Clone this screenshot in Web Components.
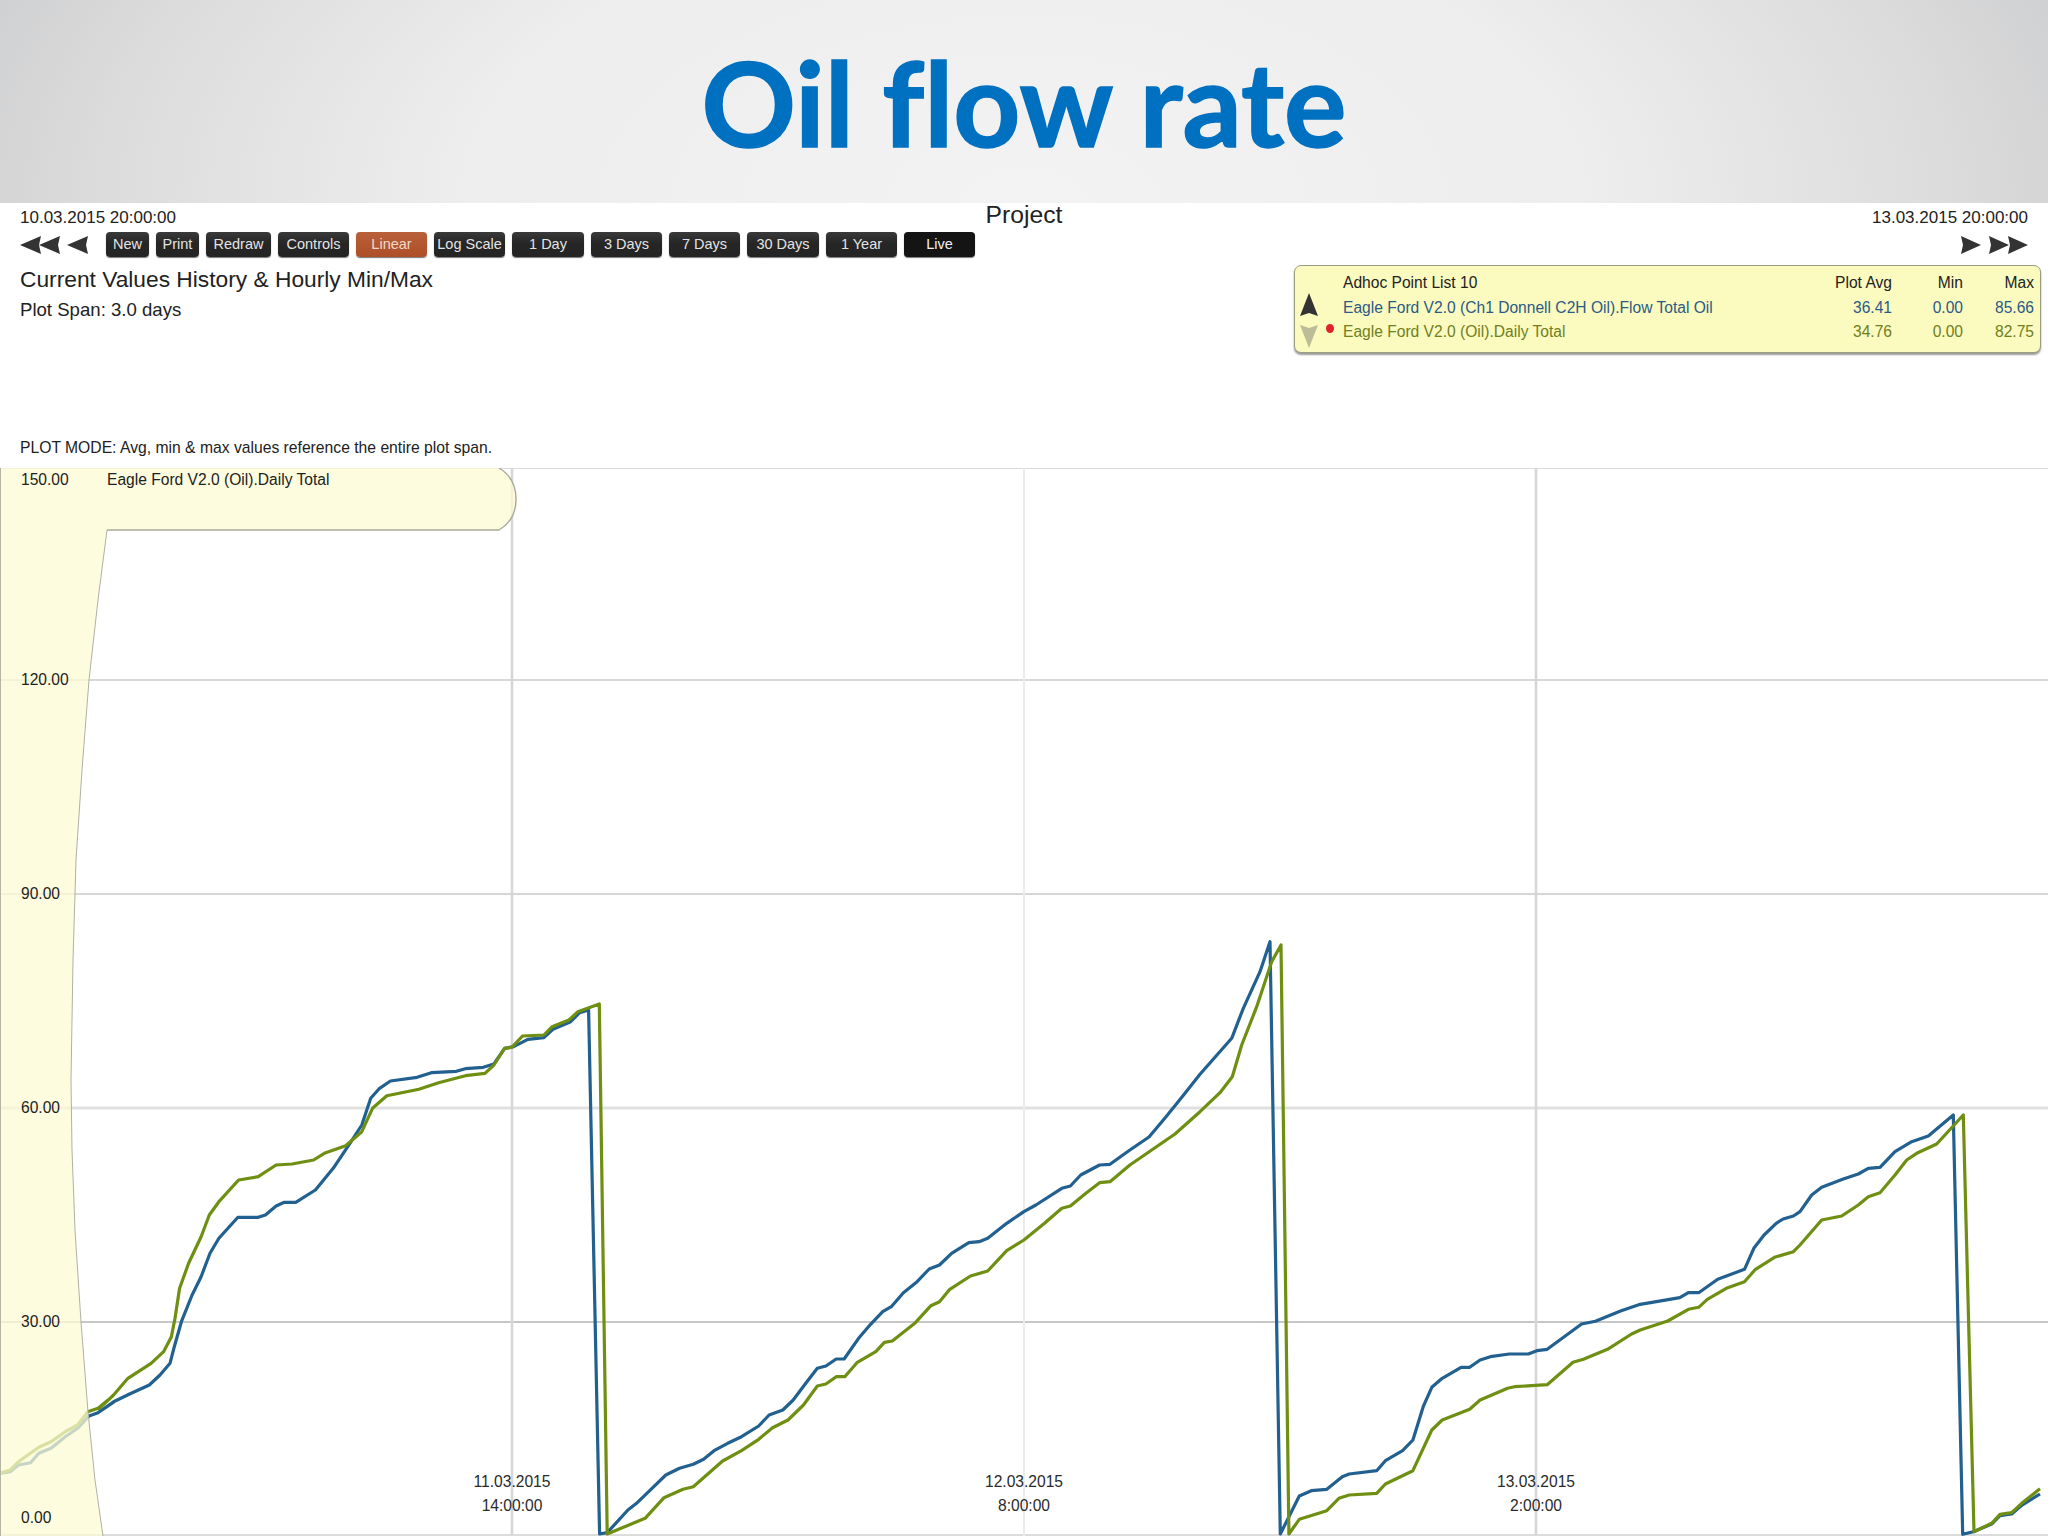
<!DOCTYPE html>
<html lang="en">
<head>
<meta charset="utf-8">
<title>Oil flow rate</title>
<style>
html,body{margin:0;padding:0;background:#fff;width:2048px;height:1536px;overflow:hidden;font-family:"Liberation Sans",Arial,sans-serif;color:#222}
oil-slide{display:block}
</style>
</head>
<body>
<oil-slide>
  <slide-title>Oil flow rate</slide-title>
  <plot-controls>
    <span slot="start">10.03.2015 20:00:00</span>
    <span slot="project">Project</span>
    <span slot="end">13.03.2015 20:00:00</span>
    <tool-button slot="tools" style="--w:43px">New</tool-button>
    <tool-button slot="tools" style="--w:43px">Print</tool-button>
    <tool-button slot="tools" style="--w:65px">Redraw</tool-button>
    <tool-button slot="tools" style="--w:71px">Controls</tool-button>
    <tool-button slot="tools" style="--w:71px" kind="active">Linear</tool-button>
    <tool-button slot="tools" style="--w:71px">Log Scale</tool-button>
    <tool-button slot="tools" style="--w:72px">1 Day</tool-button>
    <tool-button slot="tools" style="--w:71px">3 Days</tool-button>
    <tool-button slot="tools" style="--w:71px">7 Days</tool-button>
    <tool-button slot="tools" style="--w:72px">30 Days</tool-button>
    <tool-button slot="tools" style="--w:71px">1 Year</tool-button>
    <tool-button slot="tools" style="--w:71px" kind="live">Live</tool-button>
    <legend-box slot="legend">
      <legend-row kind="head" name="Adhoc Point List 10" avg="Plot Avg" min="Min" max="Max"></legend-row>
      <legend-row kind="blue" name="Eagle Ford V2.0 (Ch1 Donnell C2H Oil).Flow Total Oil" avg="36.41" min="0.00" max="85.66"></legend-row>
      <legend-row kind="green" name="Eagle Ford V2.0 (Oil).Daily Total" avg="34.76" min="0.00" max="82.75"></legend-row>
    </legend-box>
  </plot-controls>
  <oil-chart></oil-chart>
</oil-slide>
<script>
function shell(el,html){el.attachShadow({mode:'open'}).innerHTML=html;}

customElements.define('oil-slide',class extends HTMLElement{
  constructor(){super();shell(this,`<style>:host{display:flex;flex-direction:column;width:2048px;height:1536px;background:#fff}</style><slot></slot>`);}
});

customElements.define('slide-title',class extends HTMLElement{
  constructor(){super();shell(this,`<style>
  :host{display:flex;align-items:center;justify-content:center;height:203px;box-sizing:border-box;padding-top:2px;
    background:radial-gradient(ellipse 56% 300% at 50% 100%,#f3f3f4 0%,#ededee 50%,#dcdcdd 80%,#c9cacb 104%);
    font:700 117px/1 Lato,"Open Sans",sans-serif;font-variant-ligatures:none;-webkit-text-stroke:1.5px #0070c0;color:#0070c0}
  </style><slot></slot>`);}
});

customElements.define('tool-button',class extends HTMLElement{
  constructor(){super();shell(this,`<style>
  :host{display:flex;align-items:center;justify-content:center;box-sizing:border-box;width:var(--w);height:25px;border-radius:4px;
    background:linear-gradient(#3a3a3a,#262626 45%,#242424);color:#e4e4e4;font:14.5px/1 "Liberation Sans",Arial,sans-serif;white-space:nowrap;
    box-shadow:0 1px 1px #777}
  :host([kind=active]){background:linear-gradient(#b9603a,#ad4f27);color:#f0d8cc}
  :host([kind=live]){background:#141414;color:#f0f0f0}
  </style><slot></slot>`);}
});

customElements.define('nav-arrows',class extends HTMLElement{
  constructor(){super();
    const dir=this.getAttribute('dir-to');
    const left=`<svg width="68" height="18" viewBox="0 0 68 18" aria-hidden="true"><path fill="#333" d="M0 9 21 0 19 9 21 18ZM19 9 40 0 38 9 40 18ZM47 9 68 0 66 9 68 18Z"/></svg>`;
    const right=`<svg width="67" height="18" viewBox="0 0 67 18" aria-hidden="true"><path fill="#333" d="M0 0 20 9 0 18 2 9ZM28 0 48 9 28 18 30 9ZM47 0 67 9 47 18 49 9Z"/></svg>`;
    shell(this,`<style>:host{display:flex;height:18px}svg{display:block}</style>${dir==='right'?right:left}`);
  }
});

customElements.define('plot-controls',class extends HTMLElement{
  constructor(){super();shell(this,`<style>
  :host{display:flex;flex-direction:column;height:265px;box-sizing:border-box;font-family:"Liberation Sans",Arial,sans-serif;color:#222}
  .top{display:grid;grid-template-columns:1fr auto 1fr;padding:0 20px;column-gap:0}
  .date{font-size:17px;line-height:20px;padding-top:5px;height:24px;box-sizing:border-box;white-space:nowrap;letter-spacing:0}
  .left{display:flex;flex-direction:column}
  .right{display:flex;flex-direction:column;align-items:flex-end;padding-right:0}
  .project{font-size:24.7px;line-height:24px;text-align:center}
  .bar{display:flex;align-items:center;margin-top:5px;height:25px}
  .tools{display:flex;gap:7px;margin-left:18px}
  .mid{display:flex;justify-content:space-between;align-items:flex-start;padding:8px 7px 0 20px}
  .h1{font-size:22.75px;line-height:30px;white-space:nowrap;margin-top:-1px}
  .h2{font-size:18.6px;line-height:24px;margin-top:4px;white-space:nowrap}
  .mode{margin-top:auto;padding:0 20px 10px;font-size:15.7px;line-height:20px;white-space:nowrap}
  </style>
  <div class="top">
    <div class="left"><div class="date"><slot name="start"></slot></div>
      <div class="bar"><nav-arrows dir-to="left"></nav-arrows><div class="tools"><slot name="tools"></slot></div></div></div>
    <div class="project"><slot name="project"></slot></div>
    <div class="right"><div class="date"><slot name="end"></slot></div>
      <div class="bar"><nav-arrows dir-to="right"></nav-arrows></div></div>
  </div>
  <div class="mid">
    <div><div class="h1">Current Values History &amp; Hourly Min/Max</div><div class="h2">Plot Span: 3.0 days</div></div>
    <slot name="legend"></slot>
  </div>
  <div class="mode">PLOT MODE: Avg, min &amp; max values reference the entire plot span.</div>`);}
});

customElements.define('legend-box',class extends HTMLElement{
  constructor(){super();shell(this,`<style>
  :host{display:block;box-sizing:border-box;width:747px;height:88px;background:#fbfabf;border:1.5px solid #9c9c80;border-radius:7px;
    box-shadow:0 2px 2px #9a9a9a;padding:5px 6px 0 48px;position:relative}
  svg{position:absolute;left:4px;top:27px}
  i{position:absolute;left:31px;top:58px;width:8px;height:9px;border-radius:50%;background:#e2202c}
  </style>
  <svg width="20" height="55" viewBox="0 0 20 55" aria-hidden="true"><path fill="#333" d="M10 0 19 23 10 20 1 23Z"/><path fill="#bdbc98" d="M1 32 10 35 19 32 10 55Z"/></svg><i></i><slot></slot>`);}
});

customElements.define('legend-row',class extends HTMLElement{
  constructor(){super();
    const a=n=>this.getAttribute(n);
    shell(this,`<style>
    :host{display:grid;grid-template-columns:1fr 70px 71px 71px;height:24.6px;font:15.6px/24.6px "Liberation Sans",Arial,sans-serif;color:#222;white-space:nowrap}
    :host([kind=blue]){color:#2c5a86}
    :host([kind=green]){color:#6f8022}
    span+span{text-align:right}
    </style><span>${a('name')}</span><span>${a('avg')}</span><span>${a('min')}</span><span>${a('max')}</span>`);
  }
});

customElements.define('oil-chart',class extends HTMLElement{
  constructor(){super();
    const z7=p=>[60+p[0]/2.8,990+p[1]/3], z8=p=>[590+p[0]/2.904,1130+p[1]/3], z9=p=>[1270+p[0]/2.904,1180+p[1]/3],
          z5=p=>[1200+p[0]/3,920+p[1]/3], z6=p=>[1800+p[0]/3,1100+p[1]/3], z4=p=>[p[0]/2.45,1300+p[1]/3];
    const blue=[
      ...[[0,520],[25,515],[45,495],[75,488],[95,460],[125,445],[160,410],[190,385],[218,348],[240,338],[280,305]].map(z4),
      ...[[120,1258],[150,1235],[195,1212],[250,1185],[280,1155],[308,1120],[320,1070],[340,995],[370,915],[395,860],[420,790],[445,745],[498,682],[555,682],[575,675],[605,648],[628,637],[660,637],[715,600],[765,535],[815,455],[845,405],[870,325],[895,295],[925,273],[1000,262],[1040,248],[1110,244],[1135,236],[1185,232],[1215,222],[1245,175],[1270,170],[1310,148],[1355,143],[1380,118],[1430,95],[1455,68],[1480,60]].map(z7),
      ...[[28,1212],[50,1208],[110,1140],[135,1120],[180,1075],[220,1035],[260,1015],[300,1003],[330,988],[360,962],[400,940],[440,920],[490,888],[520,855],[560,840],[590,810],[625,762],[660,715],[685,708],[715,687],[738,687],[780,625],[815,583],[850,545],[875,530],[910,488],[950,455],[985,417],[1015,405],[1050,370],[1100,338],[1130,335],[1155,325],[1210,280],[1260,245],[1295,225],[1370,175],[1395,168],[1425,135],[1480,105],[1510,103],[1568,60]].map(z8),
      [1149,1137],[1165,1118],[1182,1097],
      ...[[0,463],[95,355],[130,265],[180,155],[210,65]].map(z5),
      ...[[30,1062],[85,948],[120,932],[165,928],[210,890],[230,882],[310,872],[335,842],[385,812],[415,780],[445,680],[470,622],[500,595],[555,562],[580,562],[610,540],[640,530],[695,522],[750,522],[775,512],[805,508],[905,432],[945,424],[1020,392],[1075,373],[1190,353],[1215,338],[1245,338],[1300,298],[1378,268],[1405,205],[1435,165],[1470,130],[1490,117],[1520,108]].map(z9),
      ...[[0,335],[35,285],[65,262],[130,237],[175,222],[205,205],[240,202],[285,155],[335,125],[385,108],[460,45],[488,1303],[520,1295],[575,1272],[600,1247],[635,1242],[665,1216],[720,1182]].map(z6)
    ];
    const green=[
      ...[[0,520],[25,510],[45,485],[95,442],[125,425],[160,395],[190,375],[215,335],[240,325],[270,295]].map(z4),
      ...[[110,1255],[150,1215],[190,1165],[255,1120],[290,1085],[312,1040],[322,985],[335,895],[360,820],[395,740],[418,675],[445,635],[500,570],[555,560],[605,525],[650,522],[710,510],[740,490],[800,467],[845,425],[875,355],[915,317],[1005,298],[1060,278],[1135,257],[1190,250],[1215,225],[1245,175],[1265,172],[1295,138],[1355,135],[1378,110],[1425,90],[1450,65],[1510,42]].map(z7),
      ...[[50,1212],[160,1165],[215,1103],[270,1078],[300,1070],[385,993],[440,962],[490,928],[530,893],[575,870],[620,825],[660,768],[685,762],[715,740],[740,740],[775,698],[830,665],[855,637],[878,633],[945,578],[990,527],[1015,515],[1045,478],[1105,438],[1155,423],[1210,362],[1260,330],[1320,280],[1370,235],[1395,228],[1440,190],[1480,158],[1510,155],[1568,105]].map(z8),
      [1143,1156],[1175,1134],
      ...[[0,575],[60,518],[97,470],[125,375],[170,260],[215,125],[243,75]].map(z5),
      ...[[55,1062],[85,1018],[165,992],[200,955],[230,945],[310,940],[335,912],[415,872],[470,750],[500,720],[580,688],[610,660],[690,625],[710,620],[805,614],[880,547],[910,538],[980,508],[1050,462],[1075,450],[1155,423],[1215,388],[1245,382],[1270,358],[1325,325],[1378,305],[1410,268],[1465,232],[1520,215]].map(z9),
      ...[[0,435],[65,360],[125,348],[175,315],[205,290],[240,278],[285,225],[320,180],[350,160],[410,132],[490,45],[522,1295],[575,1270],[600,1243],[635,1238],[665,1210],[720,1166]].map(z6)
    ];
    const pts=a=>a.map(p=>p[0].toFixed(1)+','+p[1].toFixed(1)).join(' ');
    const edge='107,530 98,600 89,680 82,770 76,860 73,960 71,1080 72,1150 75,1230 81,1322 88,1412 95,1480 103,1536';
    const h=[[468,'#cfcfcf',1.5],[680,'#d8d8d8',2],[894,'#c8c8c8',1.5],[1108,'#e0e0e0',3],[1322,'#b5b5b5',1.5],[1535,'#dcdcdc',2]]
      .map(l=>`<line x1="0" x2="2048" y1="${l[0]}" y2="${l[0]}" stroke="${l[1]}" stroke-width="${l[2]}"/>`).join('');
    const v=[[512,'#d6d6da',2.5],[1024,'#ececec',2],[1536,'#d6d6da',2.5]]
      .map(l=>`<line y1="468" y2="1536" x1="${l[0]}" x2="${l[0]}" stroke="${l[1]}" stroke-width="${l[2]}"/>`).join('');
    const ax=[[150,480,'150.00'],[120,680,'120.00'],[90,894,'90.00'],[60,1108,'60.00'],[30,1322,'30.00'],[0,1518,'0.00']]
      .map(a=>`<div class="ax" style="top:${a[1]-468-10}px">${a[2]}</div>`).join('');
    const dt=[[512,'11.03.2015','14:00:00'],[1024,'12.03.2015','8:00:00'],[1536,'13.03.2015','2:00:00']]
      .map(d=>`<div class="dt" style="left:${d[0]}px">${d[1]}<br>${d[2]}</div>`).join('');
    shell(this,`<style>
    :host{display:block;position:relative;height:1068px;font:15.6px/20px "Liberation Sans",Arial,sans-serif;color:#222}
    svg{display:block;position:absolute;left:0;top:0}
    .ax{position:absolute;left:21px;white-space:nowrap}
    .nm{position:absolute;left:107px;top:2px;white-space:nowrap}
    .dt{position:absolute;top:1002px;transform:translateX(-50%);text-align:center;line-height:24px;white-space:nowrap;color:#2a2a2a}
    </style>
    <svg width="2048" height="1068" viewBox="0 468 2048 1068" aria-hidden="true">
      ${h}${v}
      <polyline points="${pts(blue)}" fill="none" stroke="#21608f" stroke-width="3.2" stroke-linejoin="round"/>
      <polyline points="${pts(green)}" fill="none" stroke="#6f8f12" stroke-width="3.2" stroke-linejoin="round"/>
      <path d="M0 468H499Q516 478 516 499Q516 520 499 530H107L${edge.replace(/^107,530 /,'').replace(/ /g,'L').replace(/,/g,' ')}L0 1536Z" fill="#fdfbd4" fill-opacity=".75"/>
      <polyline points="${edge}" fill="none" stroke="#b0b0a8" stroke-width="1"/>
      <path d="M107 530H499Q516 520 516 499Q516 478 499 468" fill="none" stroke="#a8a89a" stroke-width="1.4"/>
      <line x1="0.5" x2="0.5" y1="468" y2="1536" stroke="#b5b5a5"/>
    </svg>
    ${ax}<div class="nm">Eagle Ford V2.0 (Oil).Daily Total</div>${dt}`);
  }
});
</script>
</body>
</html>
